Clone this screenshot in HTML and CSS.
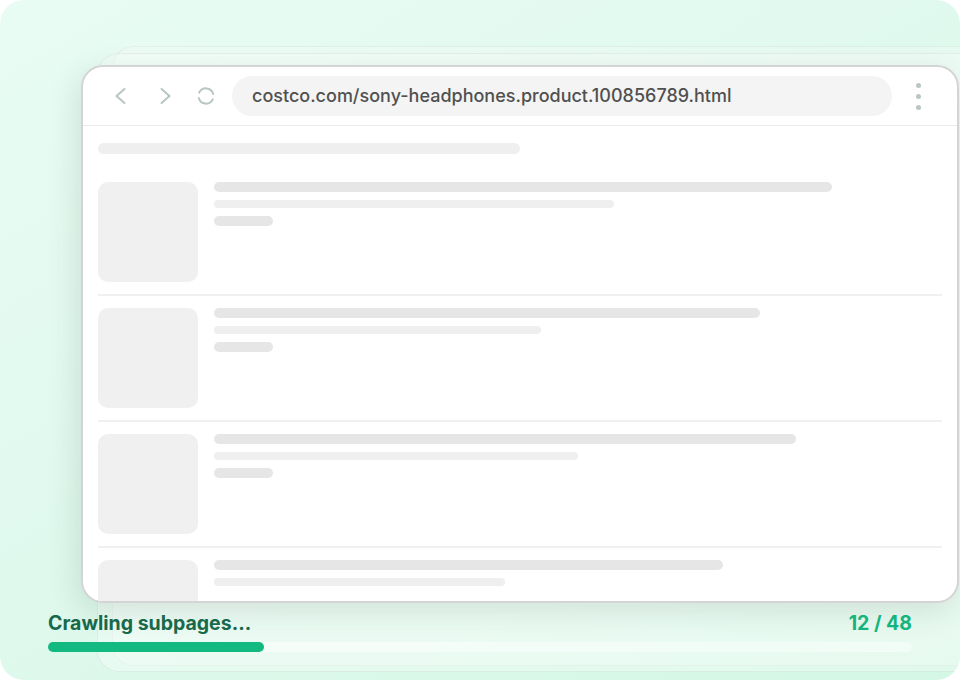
FILE: index.html
```html
<!DOCTYPE html>
<html lang="en">
<head>
<meta charset="utf-8">
<title>Crawling subpages</title>
<link rel="stylesheet" href="styles.css">
</head>
<body>
<div class="stage">
  <div class="back-card back-card--far"></div>
  <div class="back-card back-card--near"></div>

  <div class="window">
    <div class="toolbar">
      <span class="icon btn-back">
        <svg width="24" height="24" viewBox="0 0 24 24"><path d="M15.5 5 L7.5 12 L15.5 19" fill="none" stroke="#b8c6c1" stroke-width="2" stroke-linecap="round" stroke-linejoin="round"/></svg>
      </span>
      <span class="icon btn-fwd">
        <svg width="24" height="24" viewBox="0 0 24 24"><path d="M8.5 5 L16.5 12 L8.5 19" fill="none" stroke="#b8c6c1" stroke-width="2" stroke-linecap="round" stroke-linejoin="round"/></svg>
      </span>
      <span class="icon btn-reload">
        <svg width="24" height="24" viewBox="0 0 24 24">
          <path d="M5.2 8.6 A7.5 7.5 0 0 1 19.2 9.9" fill="none" stroke="#b8c6c1" stroke-width="2" stroke-linecap="round"/>
          <path d="M18.8 15.4 A7.5 7.5 0 0 1 4.8 14.1" fill="none" stroke="#b8c6c1" stroke-width="2" stroke-linecap="round"/>
        </svg>
      </span>
      <div class="url">costco.com/sony-headphones.product.100856789.html</div>
      <div class="kebab"><i></i><i></i><i></i></div>
    </div>

    <div class="content">
      <div class="sk-title"></div>

      <div class="row">
        <div class="thumb"></div>
        <div class="lines">
          <div class="ln ln-a" style="width:618px"></div>
          <div class="ln ln-b" style="width:400px"></div>
          <div class="ln ln-c"></div>
        </div>
      </div>
      <div class="row">
        <div class="thumb"></div>
        <div class="lines">
          <div class="ln ln-a" style="width:546px"></div>
          <div class="ln ln-b" style="width:327px"></div>
          <div class="ln ln-c"></div>
        </div>
      </div>
      <div class="row">
        <div class="thumb"></div>
        <div class="lines">
          <div class="ln ln-a" style="width:582px"></div>
          <div class="ln ln-b" style="width:364px"></div>
          <div class="ln ln-c"></div>
        </div>
      </div>
      <div class="row">
        <div class="thumb"></div>
        <div class="lines">
          <div class="ln ln-a" style="width:509px"></div>
          <div class="ln ln-b" style="width:291px"></div>
        </div>
      </div>
    </div>
  </div>

  <div class="footer">
    <div class="status">
      <span class="label">Crawling subpages...</span>
      <span class="count">12 / 48</span>
    </div>
    <div class="track"><div class="fill" style="width:25%"></div></div>
  </div>
</div>
</body>
</html>
```

FILE: styles.css
```css
* { box-sizing: border-box; }

html, body {
  margin: 0;
  padding: 0;
  background: #ffffff;
}

body {
  font-family: Inter, "Noto Sans", "Liberation Sans", sans-serif;
}

.stage {
  position: relative;
  width: 960px;
  height: 680px;
  border-radius: 24px;
  overflow: hidden;
  background: linear-gradient(150deg, #e9fcf4 0%, #e0f9ee 45%, #d4f7e4 100%);
  display: flex;
  flex-direction: column;
  padding-top: 65px;
}

.back-card {
  position: absolute;
  border-radius: 22px;
  z-index: 0;
}

.back-card--far {
  left: 112px;
  top: 46px;
  width: 880px;
  height: 620px;
  background: rgba(255, 255, 255, 0.22);
  border: 1px solid rgba(0, 0, 0, 0.045);
}

.back-card--near {
  left: 97px;
  top: 53px;
  width: 890px;
  height: 619px;
  background: rgba(255, 255, 255, 0.3);
  border: 1px solid rgba(0, 0, 0, 0.05);
}

.window {
  position: relative;
  z-index: 1;
  margin-left: 81px;
  width: 878px;
  height: 538px;
  flex: none;
  background: #ffffff;
  border: 2px solid #d4d4d4;
  border-radius: 22px;
  overflow: hidden;
  box-shadow: -4px 8px 30px rgba(40, 60, 50, 0.13);
}

.toolbar {
  height: 59px;
  display: flex;
  align-items: center;
  padding-left: 26px;
  border-bottom: 1px solid #ebebeb;
}

.icon {
  width: 24px;
  height: 24px;
  display: flex;
  flex: none;
}

.btn-back { margin-right: 20px; }
.btn-fwd { margin-right: 17px; }
.btn-reload { margin-right: 14px; }

.url {
  width: 660px;
  height: 40px;
  flex: none;
  border-radius: 20px;
  background: #f4f4f4;
  color: #505050;
  font-size: 18px;
  font-weight: 500;
  line-height: 40px;
  padding-left: 20px;
  white-space: nowrap;
}

.kebab {
  margin-left: 20px;
  width: 12px;
  display: flex;
  flex-direction: column;
  align-items: center;
  gap: 6px;
}

.kebab i {
  display: block;
  width: 5px;
  height: 5px;
  border-radius: 50%;
  background: #b9c7c2;
}

.content {
  padding: 17px 15px 0 15px;
}

.sk-title {
  width: 422px;
  height: 11px;
  border-radius: 6px;
  background: #efefef;
  margin-bottom: 28px;
}

.row {
  display: flex;
  gap: 16px;
  padding: 12px 0;
  border-bottom: 2px solid #f0f0f0;
}

.sk-title + .row {
  padding-top: 0;
}

.thumb {
  width: 100px;
  height: 100px;
  flex: none;
  border-radius: 10px;
  background: #f0f0f0;
}

.lines {
  display: flex;
  flex-direction: column;
  gap: 8px;
}

.ln {
  border-radius: 5px;
}

.ln-a {
  height: 10px;
  background: #e6e6e6;
}

.ln-b {
  height: 8px;
  background: #efefef;
}

.ln-c {
  width: 59px;
  height: 10px;
  background: #e6e6e6;
}

.footer {
  position: relative;
  z-index: 1;
  margin-top: 8px;
  padding: 0 48px;
}

.status {
  display: flex;
  justify-content: space-between;
  align-items: baseline;
  height: 24px;
  line-height: 24px;
  font-size: 19.5px;
  font-weight: 650;
}

.label {
  color: #17694b;
}

.count {
  color: #14b47c;
}

.track {
  margin-top: 7px;
  height: 10px;
  border-radius: 5px;
  background: rgba(255, 255, 255, 0.45);
}

.fill {
  height: 10px;
  border-radius: 5px;
  background: #12b981;
}
```
